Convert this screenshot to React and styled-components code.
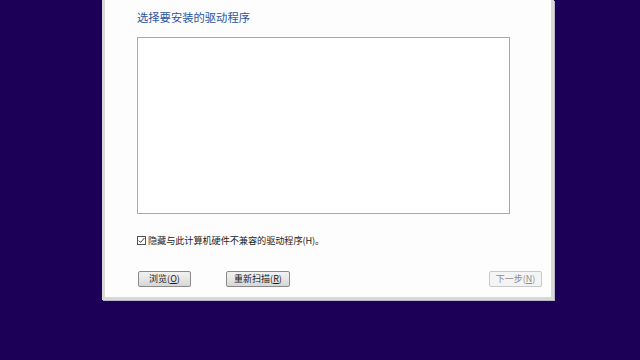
import React from "react";
import styled, { createGlobalStyle } from "styled-components";

const GlobalStyle = createGlobalStyle`
  html, body {
    margin: 0;
    padding: 0;
    background: #1c0057;
  }
  body {
    font-family: "Noto Sans CJK SC", "Noto Sans", sans-serif;
  }
`;

const Stage = styled.div`
  width: 640px;
  height: 360px;
  padding-left: 102px;
  box-sizing: border-box;
  background: #1c0057;
  overflow: hidden;
`;

const Window = styled.div`
  width: 452px;
  height: 300px;
  box-sizing: border-box;
  background: #fdfdfd;
  border: 3px solid #d8d8d8;
  border-top: 0;
  box-shadow: 1px 1px 0 #b8b8c8;
  display: flex;
  flex-direction: column;
  padding: 9px 9px 0 32px;
`;

const Title = styled.div`
  color: #2b54a0;
  font-size: 11.3px;
  line-height: 16px;
  height: 16px;
`;

const ListBox = styled.div`
  margin-top: 12px;
  width: 373px;
  height: 177px;
  box-sizing: border-box;
  border: 1px solid #a9a9a9;
  background: #ffffff;
`;

const CheckRow = styled.label`
  display: flex;
  align-items: center;
  gap: 2px;
  margin-top: 19px;
  height: 14px;
  font-size: 9.2px;
  color: #222;
  letter-spacing: -0.1px;
`;

const Box = styled.span`
  width: 9px;
  height: 9px;
  box-sizing: border-box;
  border: 1px solid #555;
  background: #fff;
  display: flex;
  align-items: center;
  justify-content: center;
`;

const Footer = styled.div`
  display: flex;
  align-items: center;
  margin-top: 24px;
  margin-left: 1px;
`;

const Button = styled.button`
  width: ${(p) => p.w}px;
  height: 16px;
  padding: 0;
  margin-right: ${(p) => p.gap || 0}px;
  margin-left: ${(p) => (p.right ? "auto" : "0")};
  box-sizing: border-box;
  border: 1px solid ${(p) => (p.disabled ? "#c8c8c8" : "#8a8a8a")};
  border-radius: 2px;
  background: ${(p) =>
    p.disabled
      ? "#f4f4f4"
      : "linear-gradient(#f2f2f2 0%, #e6e6e6 50%, #d6d6d6 100%)"};
  color: ${(p) => (p.disabled ? "#8c8c8c" : "#1a1a1a")};
  font-family: "Noto Sans CJK SC", "Noto Sans", sans-serif;
  font-size: 9px;
  line-height: 14px;
  display: flex;
  align-items: center;
  justify-content: center;
`;

const Key = styled.span`
  text-decoration: underline;
`;

export default function App() {
  return (
    <Stage>
      <GlobalStyle />
      <Window>
        <Title>选择要安装的驱动程序</Title>
        <ListBox />
        <CheckRow>
          <Box>
            <svg width="7" height="7" viewBox="0 0 7 7">
              <path d="M0.8 3.6 L2.6 5.4 L6.4 1" fill="none" stroke="#333" strokeWidth="1" />
            </svg>
          </Box>
          隐藏与此计算机硬件不兼容的驱动程序(H)。
        </CheckRow>
        <Footer>
          <Button w={53} gap={35}>
            浏览(<Key>O</Key>)
          </Button>
          <Button w={64}>
            重新扫描(<Key>R</Key>)
          </Button>
          <Button w={53} right disabled>
            下一步(<Key>N</Key>)
          </Button>
        </Footer>
      </Window>
    </Stage>
  );
}
